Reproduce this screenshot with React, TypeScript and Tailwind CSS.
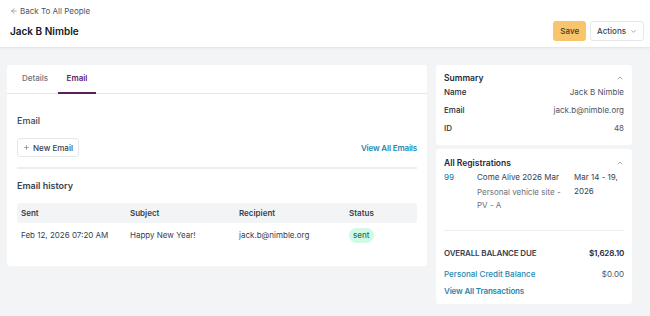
import { ArrowLeft, ChevronDown, ChevronUp, Plus } from "lucide-react";

const rows = [
  {
    sent: "Feb 12, 2026 07:20 AM",
    subject: "Happy New Year!",
    recipient: "jack.b@nimble.org",
    status: "sent",
  },
];

const SummaryRow = ({ label, value }: { label: string; value: string }) => (
  <div className="flex justify-between items-center h-[18px]">
    <span className="font-medium text-[#1f2937]">{label}</span>
    <span className="text-[#4b5563]">{value}</span>
  </div>
);

export default function App() {
  return (
    <div
      className="w-[650px] h-[316px] bg-[#f3f4f6] text-[8px] text-[#1f2937] overflow-hidden"
      style={{ fontFamily: "Inter, 'Noto Sans', sans-serif" }}>
      <header className="bg-white h-[48px] px-[10px] flex items-start justify-between border-b border-[#e5e7eb] shadow-[0_1px_2px_rgba(0,0,0,0.04)]">
        <div className="flex flex-col">
          <a className="flex items-center gap-[2px] mt-[6px] text-[#4b5563] h-[10px]">
            <ArrowLeft size={8} strokeWidth={1.5} />
            <span>Back To All People</span>
          </a>
          <h1 className="mt-[9px] text-[10px] font-semibold text-[#111827] leading-[12px]">
            Jack B Nimble
          </h1>
        </div>
        <div className="flex items-center gap-[4px] mt-[21px] mr-[-4px]">
          <button className="h-[20px] px-[7px] rounded-[3px] bg-[#f8c56d] text-[#3f3a2e] font-medium">
            Save
          </button>
          <button className="h-[20px] px-[6px] rounded-[3px] bg-white border border-[#e5e7eb] text-[#374151] font-medium flex items-center gap-[4px]">
            Actions
            <ChevronDown size={7} strokeWidth={1.5} />
          </button>
        </div>
      </header>

      <main className="flex items-start gap-[9px] px-[7px] pt-[17px]">
        <section className="w-[420px] h-[201px] bg-white rounded-[3px]">
          <div className="flex items-end h-[29px] px-[7px] border-b border-[#e5e7eb]">
            <div className="w-[44px] pl-[8px] pb-[9px] text-[#6b7280] font-medium">Details</div>
            <div className="w-[38px] text-center pb-[8px] text-[#5b1f5e] font-semibold border-b-2 border-[#5b1f5e] mb-[-1px]">
              Email
            </div>
          </div>

          <div className="px-[10px]">
            <h2 className="mt-[21px] text-[9px] font-medium text-[#374151] leading-[12px]">Email</h2>
            <div className="flex items-center justify-between mt-[11px]">
              <button className="h-[19px] w-[62px] rounded-[3px] border border-[#e5e7eb] bg-white flex items-center justify-center gap-[3px] text-[#374151] font-medium">
                <Plus size={7} strokeWidth={1.5} />
                New Email
              </button>
              <a className="text-[#2787b0] font-semibold tracking-[-0.02em]">View All Emails</a>
            </div>
            <div className="mt-[10px] h-[2px] bg-[#eceef1]" />
            <h3 className="mt-[11px] text-[9px] font-semibold text-[#374151] leading-[12px]">
              Email history
            </h3>

            <div className="mt-[11px]">
              <div className="grid grid-cols-[109px_109px_110px_1fr] h-[20px] items-center px-[4px] bg-[#f3f4f6] rounded-[3px] font-semibold text-[#374151]">
                <span>Sent</span>
                <span>Subject</span>
                <span>Recipient</span>
                <span>Status</span>
              </div>
              {rows.map((r) => (
                <div
                  key={r.sent}
                  className="grid grid-cols-[109px_109px_110px_1fr] h-[24px] items-center px-[4px] text-[#374151]">
                  <span>{r.sent}</span>
                  <span>{r.subject}</span>
                  <span>{r.recipient}</span>
                  <span>
                    <span className="inline-flex items-center h-[15px] px-[4px] rounded-full bg-[#d1fae5] text-[#2f6f52] font-medium">
                      {r.status}
                    </span>
                  </span>
                </div>
              ))}
            </div>
          </div>
        </section>

        <aside className="w-[196px] flex flex-col gap-[4px]">
          <div className="bg-white rounded-[3px] px-[8px] pt-[8px] h-[80px]">
            <div className="flex justify-between items-center h-[10px]">
              <span className="font-semibold text-[8.5px] text-[#1f2937]">Summary</span>
              <ChevronUp size={8} strokeWidth={1.5} className="text-[#4b5563]" />
            </div>
            <SummaryRow label="Name" value="Jack B Nimble" />
            <SummaryRow label="Email" value="jack.b@nimble.org" />
            <SummaryRow label="ID" value="48" />
          </div>

          <div className="bg-white rounded-[3px] px-[8px] pt-[8px] h-[155px]">
            <div className="flex justify-between items-center h-[12px]">
              <span className="font-semibold text-[8.5px] text-[#1f2937]">All Registrations</span>
              <ChevronUp size={8} strokeWidth={1.5} className="text-[#4b5563]" />
            </div>
            <div className="grid grid-cols-[33px_97px_1fr] mt-[2px] leading-[13.5px]">
              <a className="text-[#2787b0] font-medium">99</a>
              <div className="text-[#374151]">
                <div>Come Alive 2026 Mar</div>
                <div className="text-[#6b7280] mt-[1px]">Personal vehicle site -</div>
                <div className="text-[#6b7280]">PV - A</div>
              </div>
              <div className="text-[#374151]">Mar 14 - 19, 2026</div>
            </div>
            <div className="mt-[17px] h-px bg-[#eceef1]" />
            <div className="flex justify-between items-center mt-[16px] font-semibold text-[#374151] tracking-[-0.02em]">
              <span>OVERALL BALANCE DUE</span>
              <span className="text-[#1f2937]">$1,628.10</span>
            </div>
            <div className="flex justify-between items-center mt-[9px]">
              <a className="text-[#2787b0] font-medium">Personal Credit Balance</a>
              <span className="text-[#4b5563]">$0.00</span>
            </div>
            <a className="block mt-[5px] text-[#2787b0] font-semibold tracking-[-0.02em]">
              View All Transactions
            </a>
          </div>
        </aside>
      </main>
    </div>
  );
}
